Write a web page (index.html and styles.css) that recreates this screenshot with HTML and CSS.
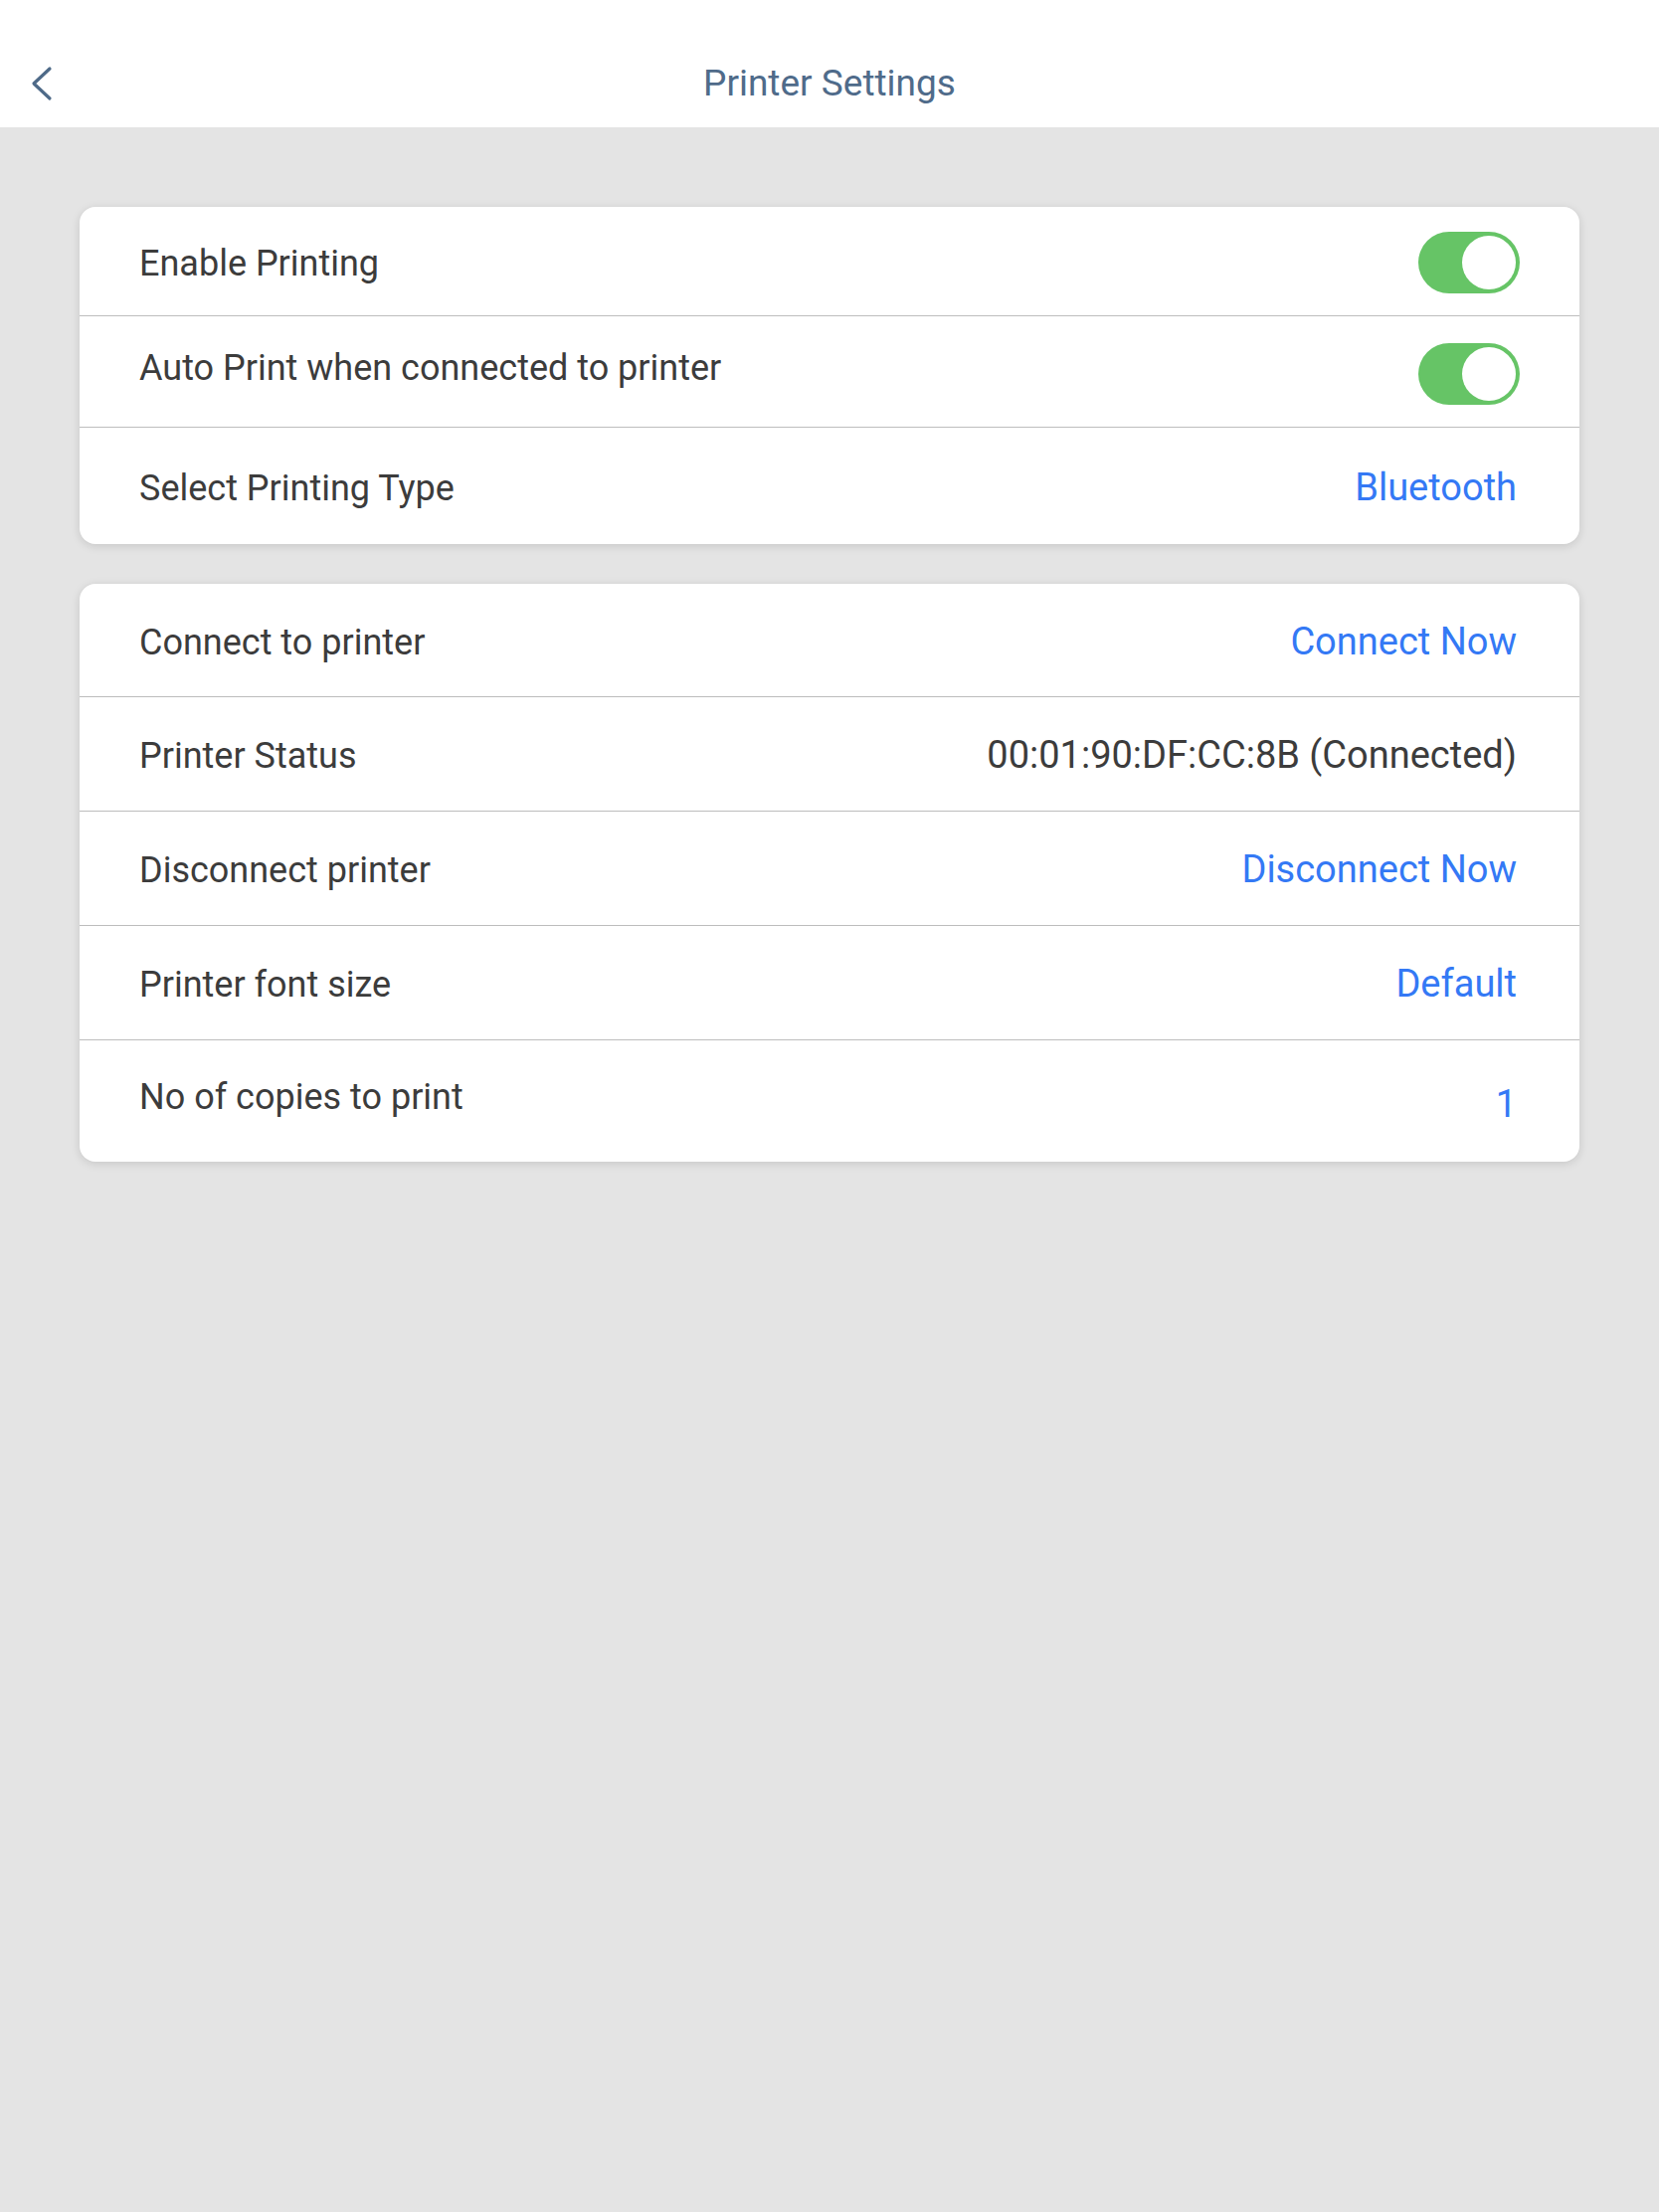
FILE: index.html
```html
<!DOCTYPE html>
<html lang="en">
<head>
<meta charset="utf-8">
<title>Printer Settings</title>
<link rel="stylesheet" href="styles.css">
</head>
<body>
<header class="topbar">
  <button class="back" aria-label="Back">
    <svg width="26" height="40" viewBox="0 0 26 40"><path d="M21 3 L5 18 L21 33" fill="none" stroke="#4e6a88" stroke-width="3.2" stroke-linecap="round" stroke-linejoin="round"/></svg>
  </button>
  <h1 class="title">Printer Settings</h1>
</header>
<main class="content">
  <section class="card">
    <div class="row r1">
      <span class="label">Enable Printing</span>
      <span class="toggle on"><span class="knob"></span></span>
    </div>
    <div class="row r2">
      <span class="label lift">Auto Print when connected to printer</span>
      <span class="toggle on low"><span class="knob"></span></span>
    </div>
    <div class="row r3">
      <span class="label">Select Printing Type</span>
      <span class="value link">Bluetooth</span>
    </div>
  </section>
  <section class="card">
    <div class="row r4">
      <span class="label">Connect to printer</span>
      <span class="value link">Connect Now</span>
    </div>
    <div class="row r5">
      <span class="label">Printer Status</span>
      <span class="value">00:01:90:DF:CC:8B (Connected)</span>
    </div>
    <div class="row r5">
      <span class="label">Disconnect printer</span>
      <span class="value link">Disconnect Now</span>
    </div>
    <div class="row r5">
      <span class="label">Printer font size</span>
      <span class="value link">Default</span>
    </div>
    <div class="row r6">
      <span class="label lift">No of copies to print</span>
      <span class="value link drop">1</span>
    </div>
  </section>
</main>
</body>
</html>
```
FILE: styles.css
```css
* { box-sizing: border-box; }
html, body {
  margin: 0;
  padding: 0;
}
body {
  width: 1668px;
  min-height: 2224px;
  background: #e4e4e4;
  font-family: Roboto, "Noto Sans", "Liberation Sans", sans-serif;
  color: #3c3c3c;
}
.topbar {
  height: 128px;
  background: #ffffff;
  display: flex;
  align-items: center;
  justify-content: center;
  position: relative;
}
.back {
  position: absolute;
  left: 29px;
  top: 66px;
  width: 26px;
  height: 40px;
  padding: 0;
  border: 0;
  background: none;
  display: flex;
}
.title {
  margin: 0;
  padding-top: 38px;
  font-size: 37px;
  font-weight: 400;
  color: #4f6b8a;
  line-height: 1;
}
.content {
  padding: 80px 80px 0;
  display: flex;
  flex-direction: column;
  gap: 40px;
}
.card {
  background: #ffffff;
  border-radius: 16px;
  box-shadow: 0 2px 10px rgba(0, 0, 0, 0.13);
  overflow: hidden;
}
.row {
  display: flex;
  align-items: center;
  justify-content: space-between;
  padding: 0 63px 0 60px;
  border-bottom: 1px solid #bdbdbd;
  line-height: 1;
}
.row:last-child { border-bottom: 0; }
.label {
  font-size: 36px;
  position: relative;
  top: 2px;
}
.value {
  font-size: 38px;
  color: #3c3c3c;
  position: relative;
  top: 1px;
}
.r1 { height: 110px; padding-right: 60px; }
.r2 { height: 112px; padding-right: 60px; }
.r3 { height: 117px; }
.r4 { height: 114px; }
.r5 { height: 115px; }
.r6 { height: 122px; }
.label.lift { top: -4px; }
.value.drop { top: 3px; }
.link { color: #3479f5; }
.toggle {
  width: 102px;
  height: 62px;
  border-radius: 31px;
  background: #66c466;
  display: flex;
  align-items: center;
  justify-content: flex-end;
  padding: 4px;
  position: relative;
  top: 1px;
}
.toggle.low { top: 2px; }
.knob {
  width: 54px;
  height: 54px;
  border-radius: 50%;
  background: #ffffff;
}
```
